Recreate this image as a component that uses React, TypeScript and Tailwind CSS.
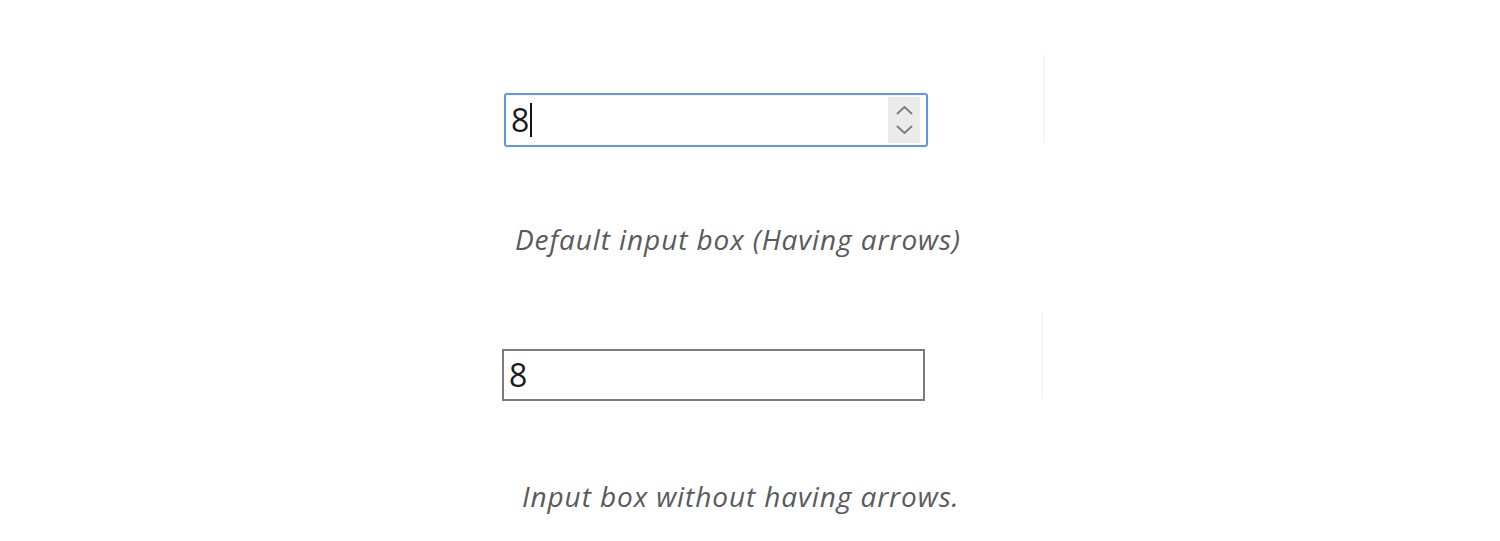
import React from "react";

const Chevron = ({ up }: { up?: boolean }) => (
  <svg width="17" height="10" viewBox="0 0 17 10" fill="none">
    <path
      d={up ? "M1.5 8.5 L8.5 2 L15.5 8.5" : "M1.5 1.5 L8.5 8 L15.5 1.5"}
      stroke="#808080"
      strokeWidth="2"
      strokeLinecap="round"
      strokeLinejoin="round"
    />
  </svg>
);

export default function App() {
  const numFont = { fontFamily: '"Open Sans", "Noto Sans", sans-serif' };
  const capFont = { fontFamily: '"Open Sans", "Noto Sans", sans-serif' };
  return (
    <div className="w-full h-[541px] bg-white overflow-hidden">
      <div className="flex flex-col pt-[55px]">
        {/* Row 1 */}
        <div className="flex items-start">
          <div className="ml-[504px] mt-[38px] w-[424px] h-[54px] border-2 border-[#5e97e3] rounded-[3px] flex items-center pl-[5px] pr-[6px]">
            <span className="text-[32px] leading-none text-[#1a1a1a] mt-[-1px]" style={numFont}>8</span>
            <span className="w-[2px] h-[34px] bg-[#111] ml-[1px]" />
            <div className="ml-auto w-[32px] h-[46px] bg-[#ebebeb] flex flex-col items-center justify-center gap-[10px]">
              <Chevron up />
              <Chevron />
            </div>
          </div>
          <div className="ml-[115px] w-[2px] h-[88px] bg-[#f7f7f7]" />
        </div>
        <div className="ml-[515px] mt-[78px] text-[28px] italic text-[#585a5e] leading-none tracking-[0.9px]" style={capFont}>
          Default input box (Having arrows)
        </div>
        {/* Row 2 */}
        <div className="flex items-start mt-[58px]">
          <div className="ml-[502px] mt-[38px] w-[423px] h-[52px] border-2 border-[#7c7c7c] flex items-center pl-[5px]">
            <span className="text-[32px] leading-none text-[#1a1a1a]" style={numFont}>8</span>
          </div>
          <div className="ml-[116px] w-[2px] h-[88px] bg-[#f7f7f7]" />
        </div>
        <div className="ml-[522px] mt-[81px] text-[28px] italic text-[#585a5e] leading-none tracking-[0.9px]" style={capFont}>
          Input box without having arrows.
        </div>
      </div>
    </div>
  );
}
